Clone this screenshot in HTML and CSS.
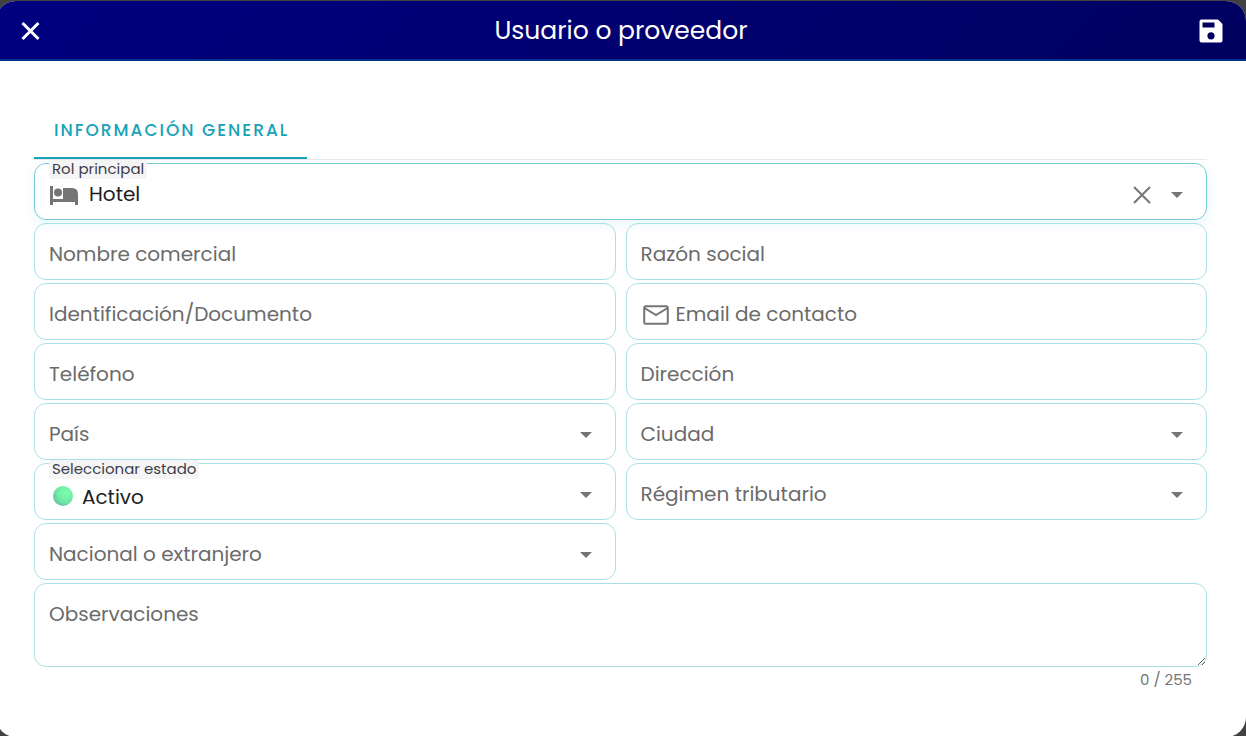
FILE: index.html
```html
<!DOCTYPE html>
<html lang="es">
<head>
<meta charset="utf-8">
<meta name="viewport" content="width=device-width, initial-scale=1">
<title>Usuario o proveedor</title>
<link rel="stylesheet" href="styles.css">
</head>
<body>
<main class="dialog">
  <header class="toolbar">
    <button class="icon-button" type="button" aria-label="Cerrar">
      <svg class="close-icon" viewBox="0 0 20 20"><path d="M1.500 2L17.500 18M17.500 2L1.500 18"/></svg>
    </button>
    <h1 class="title">Usuario o proveedor</h1>
    <button class="icon-button" type="submit" form="general" aria-label="Guardar">
      <svg class="save-icon" viewBox="0 0 24 24"><path fill-rule="evenodd" d="M2 0.500H19L23.500 5V21.500Q23.500 23.500 21.500 23.500H2.500Q0.500 23.500 0.500 21.500V2.500Q0.500 0.500 2.500 0.500ZM3.500 3.500V8.500H15.500V3.500ZM12 13.200A3.600 3.600 0 1 0 12 20.400A3.600 3.600 0 1 0 12 13.200Z"/></svg>
    </button>
  </header>
  <div class="content">
    <nav class="tabs">
      <button class="tab" type="button">INFORMACIÓN GENERAL</button>
    </nav>
    <form class="form" id="general">
      <div class="field field-wide field-active">
        <select class="control value-role" id="rol"><option>Hotel</option></select>
        <label class="label-floating" for="rol">Rol principal</label>
        <svg class="lead-icon bed-icon" viewBox="0 0 28 20"><path d="M0 0H3V13H13V2H22Q28 2 28 8V19H25V16H3V19H0Z"/><circle cx="8" cy="6.500" r="4"/></svg>
        <button class="clear-button" type="button" aria-label="Borrar rol principal"><svg class="clear-icon" viewBox="0 0 18 18"><path d="M1 1L17 17M17 1L1 17"/></svg></button>
        <svg class="arrow" viewBox="0 0 12 6"><path d="M0 0H12L6 6Z"/></svg>
      </div>
      <div class="field">
        <input class="control" id="nombre" type="text">
        <label class="label" for="nombre">Nombre comercial</label>
      </div>
      <div class="field">
        <input class="control" id="razon" type="text">
        <label class="label" for="razon">Razón social</label>
      </div>
      <div class="field">
        <input class="control" id="documento" type="text">
        <label class="label" for="documento">Identificación/Documento</label>
      </div>
      <div class="field">
        <input class="control" id="email" type="email">
        <label class="label label-email" for="email">
          <svg class="mail-icon" viewBox="0 0 26 20"><rect x="1.200" y="1.200" width="23.600" height="17.600" rx="1.500"/><path d="M1.500 3L13 10L24.500 3"/></svg>
          Email de contacto
        </label>
      </div>
      <div class="field">
        <input class="control" id="telefono" type="tel">
        <label class="label" for="telefono">Teléfono</label>
      </div>
      <div class="field">
        <input class="control" id="direccion" type="text">
        <label class="label" for="direccion">Dirección</label>
      </div>
      <div class="field">
        <select class="control" id="pais"><option></option></select>
        <label class="label" for="pais">País</label>
        <svg class="arrow" viewBox="0 0 12 6"><path d="M0 0H12L6 6Z"/></svg>
      </div>
      <div class="field">
        <select class="control" id="ciudad"><option></option></select>
        <label class="label" for="ciudad">Ciudad</label>
        <svg class="arrow" viewBox="0 0 12 6"><path d="M0 0H12L6 6Z"/></svg>
      </div>
      <div class="field">
        <select class="control value-state" id="estado"><option>Activo</option></select>
        <label class="label-floating" for="estado">Seleccionar estado</label>
        <span class="lead-icon state-dot"></span>
        <svg class="arrow" viewBox="0 0 12 6"><path d="M0 0H12L6 6Z"/></svg>
      </div>
      <div class="field">
        <select class="control" id="regimen"><option></option></select>
        <label class="label" for="regimen">Régimen tributario</label>
        <svg class="arrow" viewBox="0 0 12 6"><path d="M0 0H12L6 6Z"/></svg>
      </div>
      <div class="field">
        <select class="control" id="origen"><option></option></select>
        <label class="label" for="origen">Nacional o extranjero</label>
        <svg class="arrow" viewBox="0 0 12 6"><path d="M0 0H12L6 6Z"/></svg>
      </div>
      <div class="field field-wide">
        <textarea class="control control-area" id="observaciones" maxlength="255"></textarea>
        <label class="label" for="observaciones">Observaciones</label>
      </div>
    </form>
    <p class="counter">0 / 255</p>
  </div>
</main>
</body>
</html>
```
FILE: styles.css
```css
* {
  box-sizing: border-box;
}

html {
  height: 100%;
  overflow: hidden;
  background: #424242;
}

body {
  margin: 0;
  font-family: Poppins, Inter, sans-serif;
  font-size: 20px;
  color: #212121;
}

button,
input,
select,
textarea {
  font: inherit;
  color: inherit;
}

button {
  padding: 0;
  border: 0;
  background: none;
  cursor: pointer;
}

svg {
  display: block;
}

.dialog {
  min-height: 100vh;
  margin: 1px 0 0 -4px;
  border-radius: 20px;
  overflow: hidden;
  background: #fff;
}

.toolbar {
  display: flex;
  align-items: center;
  justify-content: space-between;
  height: 60px;
  padding: 2px 20px 0;
  border-bottom: 2px solid #003087;
  background: linear-gradient(135deg, #000080, #000060);
  color: #fff;
}

.title {
  margin: 0;
  font-size: 25px;
  font-weight: 400;
}

.icon-button {
  display: grid;
  place-items: center;
  width: 30px;
  height: 40px;
}

.close-icon {
  width: 20px;
  fill: none;
  stroke: #fff;
  stroke-width: 3;
}

.save-icon {
  width: 24px;
  fill: #fff;
}

.content {
  padding: 40px 39px 0 38px;
}

.tabs {
  display: flex;
  border-bottom: 1px solid #e8e8e8;
}

.tab {
  height: 58px;
  padding: 2px 18px 0 20px;
  border-bottom: 2px solid #17a2b8;
  color: #17a2b8;
  font-size: 17px;
  font-weight: 500;
  letter-spacing: 2px;
}

.form {
  display: grid;
  grid-template-columns: 1fr 1fr;
  gap: 3px 10px;
  margin-top: 3px;
}

.field {
  display: grid;
  grid-template-columns: minmax(0, 1fr);
  align-items: start;
  border: 1px solid #a9dfe6;
  border-radius: 12px;
}

.field > * {
  grid-area: 1 / 1;
}

.field-wide {
  grid-column: 1 / -1;
}

.field-active {
  border-color: #78cbd6;
  box-shadow: 0 4px 12px rgba(23, 162, 184, 0.1);
}

.control {
  width: 100%;
  height: 55px;
  padding: 6px 14px 0;
  border: 0;
  border-radius: 12px;
  outline: 0;
  background: none;
  appearance: none;
}

.control-area {
  display: block;
  height: 82px;
  padding-top: 16px;
  resize: vertical;
}

.value-role {
  padding: 4px 80px 0 54px;
}

.value-state {
  padding: 10px 50px 0 47px;
}

.label {
  justify-self: start;
  margin: 15px 0 0 14px;
  line-height: 30px;
  color: #6b6b6b;
  pointer-events: none;
}

.label-email {
  display: flex;
  align-items: center;
  gap: 7px;
}

.label-floating {
  justify-self: start;
  margin: -4px 0 0 14px;
  padding: 0 3px 1px;
  background: #f5f5f5;
  color: #3d3d4a;
  font-size: 15px;
  line-height: 18px;
}

.lead-icon {
  margin-left: 15px;
  pointer-events: none;
}

.bed-icon {
  width: 28px;
  margin-top: 22px;
  fill: #757575;
}

.state-dot {
  width: 20px;
  height: 20px;
  margin: 22px 0 0 18px;
  border-radius: 50%;
  background: radial-gradient(circle at 65% 35%, #7dffb0, #70e8a4 50%, #5c9fa0);
}

.mail-icon {
  width: 26px;
  margin: 2px 0 0 2px;
  fill: none;
  stroke: #757575;
  stroke-width: 2;
}

.arrow {
  justify-self: end;
  width: 12px;
  margin: 28px 23px 0 0;
  fill: #757575;
  pointer-events: none;
}

.clear-button {
  justify-self: end;
  margin: 22px 55px 0 0;
}

.clear-icon {
  width: 18px;
  fill: none;
  stroke: #757575;
  stroke-width: 2;
}

.counter {
  margin: 3px 15px 0 0;
  color: #757575;
  font-size: 15px;
  line-height: 20px;
  text-align: right;
}
```
